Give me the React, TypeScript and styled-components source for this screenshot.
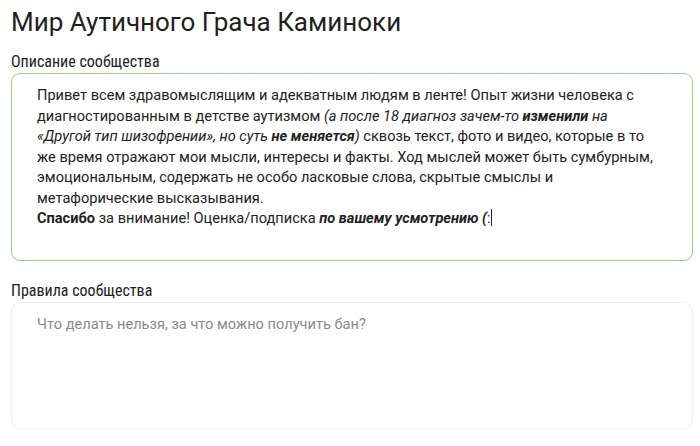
import React from "react";
import styled, { createGlobalStyle } from "styled-components";

const Global = createGlobalStyle`
  html, body { margin: 0; padding: 0; background: #fff; }
  body { font-family: Roboto, "Liberation Sans", sans-serif; color: #222; }
`;

const Page = styled.div`
  width: 700px;
  box-sizing: border-box;
  padding: 7px 7px 0 11px;
  display: flex;
  flex-direction: column;
`;

const Title = styled.h1`
  margin: 0;
  font-size: 26px;
  font-weight: 400;
  line-height: 30px;
  color: #1f1f1f;
`;

const Field = styled.div<{ $top: number }>`
  display: flex;
  flex-direction: column;
  margin-top: ${(p) => p.$top}px;
`;

const Label = styled.label`
  font-family: "Roboto Condensed", "Liberation Sans Narrow", Roboto, sans-serif;
  font-size: 16px;
  line-height: 18px;
  color: #222;
  margin-bottom: 2px;
`;

const Box = styled.div<{ $active?: boolean; $height: number }>`
  box-sizing: border-box;
  width: 682px;
  height: ${(p) => p.$height}px;
  border: 1px solid ${(p) => (p.$active ? "#9bd46e" : "#efefef")};
  border-radius: 9px;
  padding: 11px 32px 0 25px;
  font-size: 14.6px;
  line-height: 20.5px;
  color: #222;
`;

const Placeholder = styled.span`
  color: #8a8a8a;
`;

const Caret = styled.span`
  display: inline-block;
  width: 1px;
  height: 17px;
  background: #222;
  vertical-align: -3px;
`;

export default function App() {
  return (
    <>
      <Global />
      <Page>
        <Title>Мир Аутичного Грача Каминоки</Title>
        <Field $top={16}>
          <Label>Описание сообщества</Label>
          <Box $active $height={188}>
            Привет всем здравомыслящим и адекватным людям в ленте! Опыт жизни человека с
            диагностированным в детстве аутизмом{" "}
            <i>
              (а после 18 диагноз зачем-то <b>изменили</b> на «Другой тип шизофрении», но суть{" "}
              <b>не меняется</b>)
            </i>{" "}
            сквозь текст, фото и видео, которые в то же время отражают мои мысли, интересы и
            факты. Ход мыслей может быть сумбурным, эмоциональным, содержать не особо ласковые
            слова, скрытые смыслы и метафорические высказывания.
            <br />
            <b>Спасибо</b> за внимание! Оценка/подписка{" "}
            <b>
              <i>по вашему усмотрению (</i>
            </b>
            :<Caret />
          </Box>
        </Field>
        <Field $top={21}>
          <Label>Правила сообщества</Label>
          <Box $height={127}>
            <Placeholder>Что делать нельзя, за что можно получить бан?</Placeholder>
          </Box>
        </Field>
      </Page>
    </>
  );
}
